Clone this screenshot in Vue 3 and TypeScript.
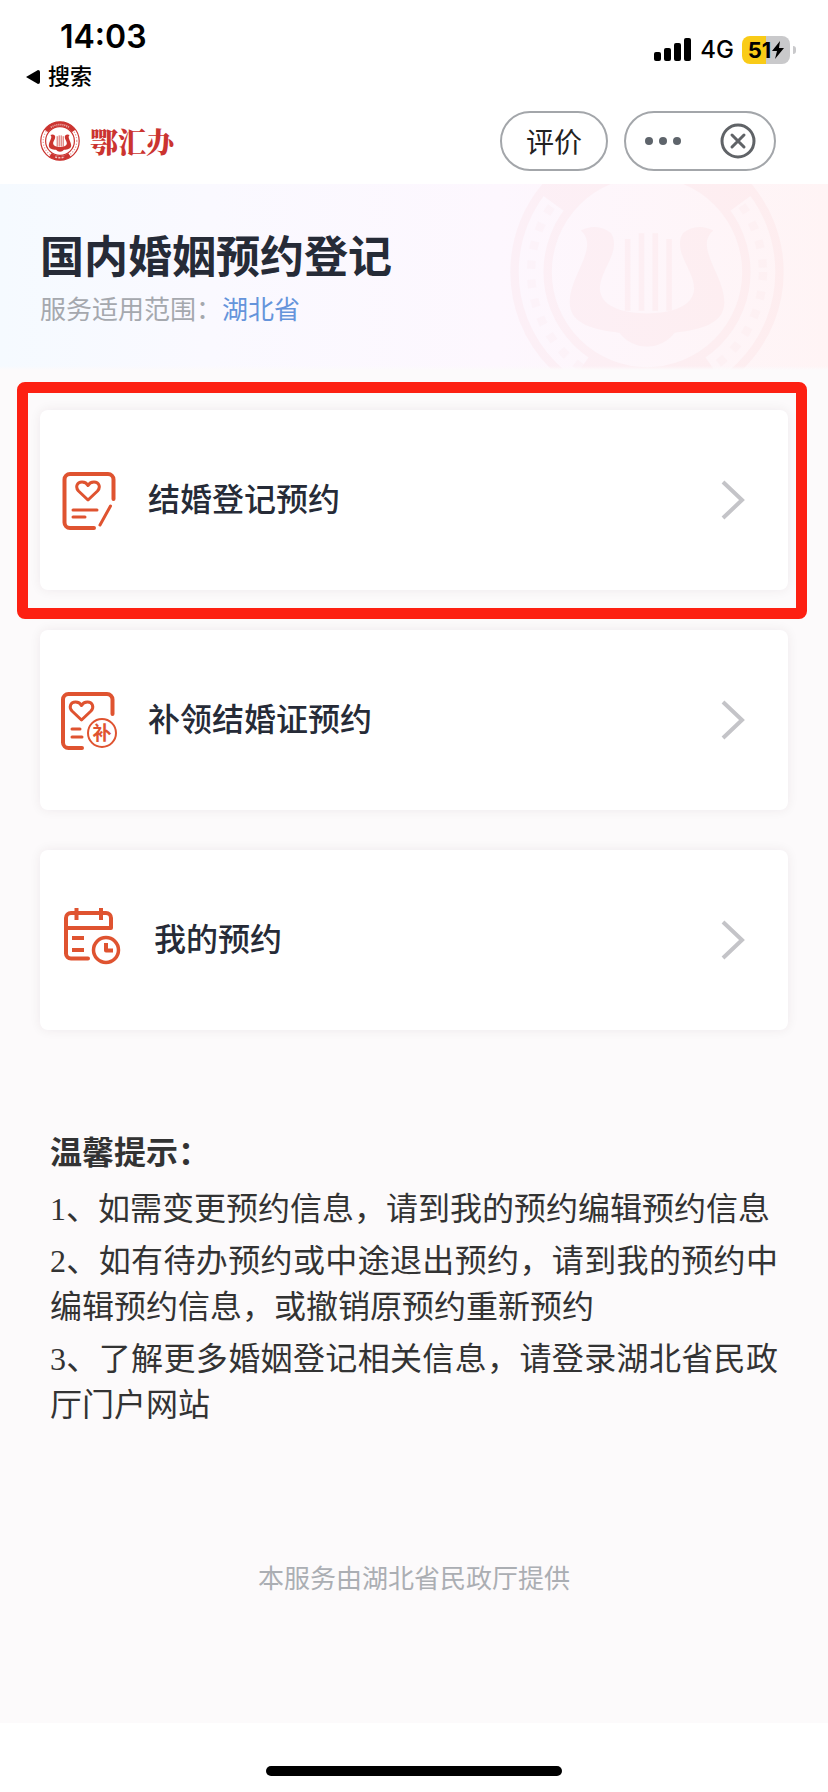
<script setup lang="ts">
interface Service {
  id: 'register' | 'reissue' | 'mine'
  label: string
  highlighted: boolean
}

const services: Service[] = [
  { id: 'register', label: '结婚登记预约', highlighted: true },
  { id: 'reissue', label: '补领结婚证预约', highlighted: false },
  { id: 'mine', label: '我的预约', highlighted: false },
]

const tips: string[] = [
  '1、如需变更预约信息，请到我的预约编辑预约信息',
  '2、如有待办预约或中途退出预约，请到我的预约中编辑预约信息，或撤销原预约重新预约',
  '3、了解更多婚姻登记相关信息，请登录湖北省民政厅门户网站',
]
</script>

<template>
  <div class="page">
    <svg class="defs" width="0" height="0" aria-hidden="true">
      <symbol id="emblem" viewBox="-50 -50 100 100">
        <g fill="none" stroke="currentColor">
          <circle r="48" stroke-width="3" />
          <circle r="36" stroke-width="3" />
          <circle r="42" stroke-width="3" stroke-dasharray="3 4" opacity="0.5" />
          <path d="M-34 -25A42 42 0 0 1 34 -25" stroke-width="11" />
          <path d="M-24 35A42 42 0 0 0 24 35" stroke-width="11" />
        </g>
        <path d="M-23 -34A41 41 0 0 1 23 -34" fill="none" stroke="#fff" stroke-width="4" stroke-dasharray="3 2" opacity="0.6" />
        <path d="M-12 40A42 42 0 0 0 12 40" fill="none" stroke="#fff" stroke-width="4" stroke-dasharray="5 3" opacity="0.7" />
        <path
          fill="currentColor"
          d="M-24-15Q-18-18-13-14C-9-7-18 0-17 7C-16 13-8 15 0 15C8 15 16 13 17 7C18 0 9-7 13-14Q18-18 24-15C17-9 28 1 28 11C28 19 19 21 10 22Q6 27 0 27Q-6 27-10 22C-19 21-28 19-28 11C-28 1-17-9-24-15Z"
        />
        <path d="M-7-12V14M-2-14V14M3-14V14M8-12V14" fill="none" stroke="currentColor" stroke-width="2" />
      </symbol>
    </svg>

    <div class="status">
      <div class="status-left">
        <time class="clock">14:03</time>
        <a class="back" href="#">
          <svg width="14" height="14" viewBox="0 0 14 14" aria-hidden="true">
            <path d="M0 7L12 0Q14 0 14 2V12Q14 14 12 14Z" />
          </svg>
          <span>搜索</span>
        </a>
      </div>
      <div class="status-right">
        <svg width="38" height="24" viewBox="0 0 38 24" aria-hidden="true">
          <rect x="0" y="14" width="7" height="9" rx="2" />
          <rect x="10" y="10" width="7" height="13" rx="2" />
          <rect x="20" y="5" width="7" height="18" rx="2" />
          <rect x="30" y="0" width="7" height="23" rx="2" />
        </svg>
        <span class="network">4G</span>
        <div class="battery">
          <span>51</span>
          <svg width="12" height="18" viewBox="0 0 12 18" aria-hidden="true">
            <path d="M8 0L0 10H5L3 18L12 7H7Z" />
          </svg>
        </div>
      </div>
    </div>

    <header class="header">
      <div class="brand">
        <svg class="logo" width="40" height="40" aria-hidden="true"><use href="#emblem" /></svg>
        <span class="brand-name">鄂汇办</span>
      </div>
      <div class="actions">
        <button class="pill rate" type="button">评价</button>
        <div class="pill capsule">
          <button type="button" aria-label="更多">
            <svg width="38" height="10" viewBox="0 0 38 10" aria-hidden="true">
              <circle cx="5" cy="5" r="4" />
              <circle cx="19" cy="5" r="4" />
              <circle cx="33" cy="5" r="4" />
            </svg>
          </button>
          <button type="button" aria-label="关闭">
            <svg width="36" height="36" viewBox="0 0 36 36" fill="none" stroke-linecap="round" aria-hidden="true">
              <circle cx="18" cy="18" r="16" stroke-width="3" />
              <path d="M12 12L24 24M24 12L12 24" stroke-width="3" />
            </svg>
          </button>
        </div>
      </div>
    </header>

    <main class="content">
      <section class="banner">
        <svg class="watermark" width="276" height="276" aria-hidden="true"><use href="#emblem" /></svg>
        <h1>国内婚姻预约登记</h1>
        <p>服务适用范围：<a href="#">湖北省</a></p>
      </section>

      <ul class="services">
        <li v-for="service in services" :key="service.id">
          <button class="card" type="button">
            <svg v-if="service.id === 'register'" class="icon" width="60" height="64" viewBox="0 0 60 64" aria-hidden="true">
              <path stroke-width="4" d="M34 60H10a5.500 5.500 0 0 1-5.500-5.500V11.500A5.500 5.500 0 0 1 10 6H48a5.500 5.500 0 0 1 5.500 5.500V31" />
              <path stroke-width="3" d="M28 32L18.500 23C15 19 17 14 22 14C25 14 27 15.500 28 17.500C29 15.500 31 14 34 14C39 14 41 19 37.500 23ZM13 42H37M13 49H25M50.500 38L40 57" />
            </svg>
            <svg v-else-if="service.id === 'reissue'" class="icon" width="60" height="64" viewBox="0 0 60 64" aria-hidden="true">
              <path stroke-width="4" d="M22 60H8.500A5.500 5.500 0 0 1 3 54.500V11.500A5.500 5.500 0 0 1 8.500 6H47a5.500 5.500 0 0 1 5.500 5.500V26" />
              <path stroke-width="3" d="M21.500 32L12 23C8.500 19 10.500 14 15.500 14C18.500 14 20.500 15.500 21.500 17.500C22.500 15.500 24.500 14 27.500 14C32.500 14 34.500 19 31 23ZM12 41H20M12 49H22" />
              <circle cx="42" cy="45" r="14" stroke-width="2" />
              <text x="42" y="52" text-anchor="middle">补</text>
            </svg>
            <svg v-else class="icon" width="66" height="64" viewBox="0 0 66 64" aria-hidden="true">
              <path stroke-width="4" d="M28 50.500H11A5 5 0 0 1 6 45.500V10A5 5 0 0 1 11 5H46A5 5 0 0 1 51 10V20H6" />
              <path stroke-width="4" stroke-linecap="butt" d="M16.500 0V12M41 0V12M12 30H24M12 42H24M46 35V42.500H53" />
              <circle cx="46" cy="42" r="12.500" stroke-width="3.500" />
            </svg>
            <span class="label">{{ service.label }}</span>
            <svg class="chevron" width="24" height="40" viewBox="0 0 24 40" aria-hidden="true">
              <path d="M2 2L21 20L2 38" />
            </svg>
          </button>
          <span v-if="service.highlighted" class="frame"></span>
        </li>
      </ul>

      <section class="tips">
        <h2>温馨提示：</h2>
        <p v-for="tip in tips" :key="tip">{{ tip }}</p>
      </section>

      <p class="provider">本服务由湖北省民政厅提供</p>
    </main>

    <footer class="home"><span></span></footer>
  </div>
</template>

<style>
body {
  margin: 0;
  background: #fff;
}
</style>

<style scoped>
.page {
  display: flex;
  flex-direction: column;
  min-height: 100vh;
  background: #fff;
  color: #262b37;
  font-family: "Liberation Sans", "Noto Sans CJK SC", sans-serif;
}

.page * {
  box-sizing: border-box;
}

h1,
h2,
p,
ul {
  margin: 0;
  padding: 0;
}

button {
  margin: 0;
  padding: 0;
  border: 0;
  background: none;
  font-family: inherit;
  color: inherit;
  cursor: pointer;
}

a {
  color: inherit;
  text-decoration: none;
}

.defs {
  position: absolute;
}

.status {
  display: flex;
  justify-content: space-between;
  padding: 17px 32px 0 26px;
  color: #000;
}

.clock {
  display: block;
  padding-left: 34px;
  font: 600 32px/40px Inter, sans-serif;
}

.back {
  display: flex;
  align-items: center;
  gap: 8px;
  font-size: 22px;
  font-weight: 500;
  line-height: 40px;
}

.status-right {
  display: flex;
  align-items: center;
  gap: 8px;
  height: 28px;
  margin-top: 19px;
}

.network {
  font: 500 24px/28px Inter, sans-serif;
}

.battery {
  position: relative;
  display: flex;
  align-items: center;
  justify-content: center;
  gap: 1px;
  width: 48px;
  height: 28px;
  margin-right: 6px;
  border-radius: 8px;
  background: linear-gradient(90deg, #f9cb17 51%, #c9c9cb 51%);
  font: 700 22px/28px Inter, sans-serif;
}

.battery::after {
  content: "";
  position: absolute;
  top: 10px;
  right: -6px;
  width: 3px;
  height: 8px;
  border-radius: 0 3px 3px 0;
  background: #c9c9cb;
}

.header {
  display: flex;
  align-items: center;
  justify-content: space-between;
  height: 87px;
  padding: 0 52px 0 40px;
}

.brand {
  display: flex;
  align-items: center;
  gap: 10px;
  color: #cb3430;
}

.logo {
  display: block;
}

.brand-name {
  font: 900 28px/40px "Noto Serif CJK SC", "Noto Sans CJK SC", serif;
}

.actions {
  display: flex;
  gap: 16px;
}

.pill {
  height: 60px;
  border: 2px solid #a3a6aa;
  border-radius: 30px;
}

.rate {
  width: 108px;
  font-size: 28px;
  color: #222;
}

.capsule {
  display: flex;
  align-items: center;
  justify-content: space-between;
  width: 152px;
  padding: 0 18px;
}

.capsule svg {
  display: block;
  fill: #5e646b;
}

.capsule svg[fill="none"] {
  fill: none;
  stroke: #606367;
}

.content {
  flex: 1;
  background: #fcfafb;
}

.banner {
  position: relative;
  overflow: hidden;
  height: 186px;
  padding: 42px 40px 0;
  background: linear-gradient(90deg, #f5faff 0%, #faf9ff 25%, #fdf7fe 60%, #fff4f5 100%);
}

.banner::after {
  content: "";
  position: absolute;
  inset: auto 0 0;
  height: 4px;
  background: linear-gradient(rgba(252, 250, 251, 0), #fcfafb);
}

.watermark {
  position: absolute;
  top: -50px;
  right: 43px;
  color: #fb3a3a;
  opacity: 0.03;
}

.banner h1 {
  font-size: 44px;
  font-weight: 700;
  line-height: 64px;
}

.banner p {
  font-size: 26px;
  line-height: 40px;
  color: #a5a8ae;
}

.banner a {
  color: #6594db;
}

.services {
  display: flex;
  flex-direction: column;
  gap: 40px;
  padding: 40px 40px 0;
  list-style: none;
}

.services li {
  position: relative;
}

.card {
  display: flex;
  align-items: center;
  width: 100%;
  height: 180px;
  padding: 0 43px 0 20px;
  border-radius: 8px;
  background: #fff;
  box-shadow: 0 0 12px rgba(50, 30, 40, 0.07);
  text-align: left;
}

.icon {
  flex: none;
  fill: none;
  stroke: #df5330;
  stroke-linecap: round;
  stroke-linejoin: round;
}

.icon text {
  fill: #df5330;
  stroke: none;
  font: 700 19px "Noto Sans CJK SC", sans-serif;
}

.label {
  flex: 1;
  padding-left: 28px;
  font-size: 32px;
  font-weight: 500;
  line-height: 48px;
}

.chevron {
  flex: none;
  fill: none;
  stroke: #c4c4c8;
  stroke-width: 4;
}

.frame {
  position: absolute;
  inset: -28px -19px -29px -23px;
  border: 11px solid #fd2012;
  border-radius: 8px;
  pointer-events: none;
}

.tips {
  padding: 100px 50px 0;
  color: #333;
  font-family: "Liberation Serif", "Noto Sans CJK SC", serif;
  font-size: 32px;
  line-height: 46px;
  text-align: justify;
}

.tips h2 {
  margin-bottom: 10px;
  font-size: 32px;
  font-weight: 700;
}

.tips p {
  margin-bottom: 6px;
}

.provider {
  padding: 125px 0 123px;
  font-size: 26px;
  line-height: 40px;
  text-align: center;
  color: #abaeb3;
}

.home {
  display: flex;
  align-items: center;
  justify-content: center;
  height: 69px;
  padding-top: 26px;
}

.home span {
  width: 296px;
  height: 10px;
  border-radius: 5px;
  background: #000;
}
</style>
